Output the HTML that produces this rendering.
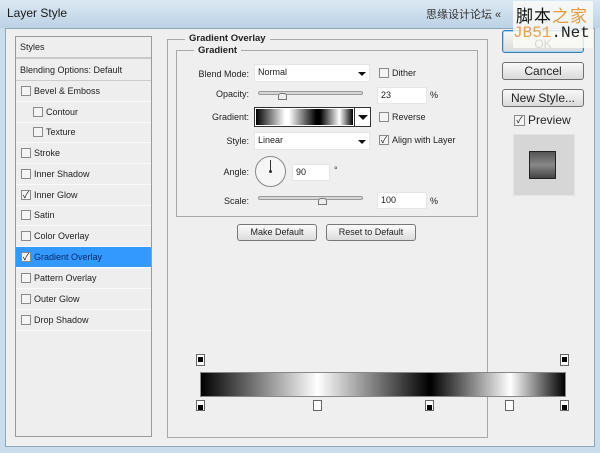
<!DOCTYPE html>
<html><head><meta charset="utf-8"><style>
*{margin:0;padding:0;box-sizing:border-box}
body{width:600px;height:453px;overflow:hidden;background:#c9dded;font-family:"Liberation Sans","Noto Sans CJK SC",sans-serif;font-size:9px;color:#222;position:relative}
.a{position:absolute}
.title{left:0;top:0;width:600px;height:28px;background:linear-gradient(#dbe8f3,#bcd2e5);}
.win{left:5px;top:28px;width:590px;height:419px;background:#efefef;border:1px solid #8fa6b8}
.lp{left:15px;top:36px;width:137px;height:401px;background:#eeeeee;border:1px solid #9a9a9a}
.it{position:absolute;left:0;width:135px;height:21px;border-bottom:1px solid #fafafa;line-height:20px;font-size:9px}
.cb{position:absolute;width:10px;height:10px;border:1px solid #8a8a8a;background:#f4f4f4;font-size:9px;line-height:8px;text-align:center;color:#111}
.gb{border:1px solid #a8a8a8}
.lbl{position:absolute;text-align:right;width:80px;font-size:9px}
.inp{position:absolute;background:#fff;border:1px solid #e6e6e6;font-size:9px;padding:2px 3px}
.btn{position:absolute;border:1px solid #777;border-radius:3px;background:linear-gradient(#fbfbfb,#dcdcdc);text-align:center;font-size:9px;line-height:15px}
.rbtn{position:absolute;left:502px;width:82px;border:1px solid #707070;border-radius:3px;background:linear-gradient(#f8f8f8,#dadada);text-align:center;font-size:12px}
.sl{position:absolute;height:4px;background:#d6d6d6;border:1px solid #9a9a9a;border-radius:2px}
.th{position:absolute;width:9px;height:7px;border:1px solid #777;background:#eee;border-radius:3px 3px 0 0}
.arr{position:absolute;width:0;height:0;border-left:4px solid transparent;border-right:4px solid transparent;border-top:4px solid #111}
.st{position:absolute;width:9px;height:11px;border:1px solid #666;background:#fff}
.st i{position:absolute;left:1px;top:3px;width:5px;height:5px;background:#000}
</style></head><body>
<div class="a title"></div>
<div class="a" style="left:7px;top:6px;font-size:12px;color:#1a1a1a">Layer Style</div>
<div class="a" style="left:426px;top:6px;font-size:11px;color:#333">思缘设计论坛 «</div>
<div class="a win"></div>

<div class="a lp">
 <div class="it" style="top:0;height:22px;padding-left:4px;border-bottom:2px solid #c8c8c8">Styles</div>
 <div class="it" style="top:23px;padding-left:4px;border-bottom:1px solid #ccc">Blending Options: Default</div>
 <div class="it" style="top:44px;padding-left:18px">Bevel &amp; Emboss<span class="cb" style="left:5px;top:5px"></span></div>
 <div class="it" style="top:65px;padding-left:30px">Contour<span class="cb" style="left:17px;top:5px"></span></div>
 <div class="it" style="top:85px;padding-left:30px">Texture<span class="cb" style="left:17px;top:5px"></span></div>
 <div class="it" style="top:106px;padding-left:18px">Stroke<span class="cb" style="left:5px;top:5px"></span></div>
 <div class="it" style="top:127px;padding-left:18px">Inner Shadow<span class="cb" style="left:5px;top:5px"></span></div>
 <div class="it" style="top:148px;padding-left:18px">Inner Glow<span class="cb" style="left:5px;top:5px">✓</span></div>
 <div class="it" style="top:168px;padding-left:18px">Satin<span class="cb" style="left:5px;top:5px"></span></div>
 <div class="it" style="top:189px;padding-left:18px">Color Overlay<span class="cb" style="left:5px;top:5px"></span></div>
 <div class="it" style="top:210px;padding-left:18px;background:#3399ff;color:#0a2a66">Gradient Overlay<span class="cb" style="left:5px;top:5px">✓</span></div>
 <div class="it" style="top:231px;padding-left:18px">Pattern Overlay<span class="cb" style="left:5px;top:5px"></span></div>
 <div class="it" style="top:252px;padding-left:18px">Outer Glow<span class="cb" style="left:5px;top:5px"></span></div>
 <div class="it" style="top:273px;padding-left:18px">Drop Shadow<span class="cb" style="left:5px;top:5px"></span></div>
</div>

<div class="a gb" style="left:167px;top:39px;width:321px;height:399px"></div>
<div class="a" style="left:185px;top:33px;background:#efefef;padding:0 4px;font-weight:bold;font-size:9.5px">Gradient Overlay</div>
<div class="a gb" style="left:176px;top:50px;width:302px;height:167px"></div>
<div class="a" style="left:194px;top:45px;background:#efefef;padding:0 4px;font-weight:bold;font-size:9.5px">Gradient</div>

<div class="lbl" style="left:169px;top:69px">Blend Mode:</div>
<div class="inp" style="left:254px;top:64px;width:116px;height:18px">Normal</div><div class="arr" style="left:358px;top:72px"></div>
<div class="cb" style="left:379px;top:68px"></div><div class="a" style="left:392px;top:68px">Dither</div>

<div class="lbl" style="left:169px;top:89px">Opacity:</div>
<div class="sl" style="left:258px;top:91px;width:105px"></div><div class="th" style="left:278px;top:93px"></div>
<div class="inp" style="left:377px;top:87px;width:50px;height:17px">23</div><div class="a" style="left:430px;top:90px">%</div>

<div class="lbl" style="left:169px;top:112px">Gradient:</div>
<div class="a" style="left:254px;top:107px;width:117px;height:20px;border:1px solid #333;background:#fff"></div>
<div class="a" style="left:256px;top:109px;width:97px;height:16px;background:linear-gradient(90deg,#000,#fff 30%,#fff 34%,#000 62%,#000 66%,#fff 86%,#000)"></div>
<div class="a" style="left:354px;top:108px;width:1px;height:18px;background:#333"></div>
<div class="arr" style="left:358px;top:115px;border-top-width:5px;border-left-width:5px;border-right-width:5px"></div>
<div class="cb" style="left:379px;top:112px"></div><div class="a" style="left:392px;top:112px">Reverse</div>

<div class="lbl" style="left:169px;top:136px">Style:</div>
<div class="inp" style="left:254px;top:132px;width:116px;height:18px">Linear</div><div class="arr" style="left:358px;top:140px"></div>
<div class="cb" style="left:379px;top:135px">✓</div><div class="a" style="left:392px;top:135px">Align with Layer</div>

<div class="lbl" style="left:169px;top:167px">Angle:</div>
<div class="a" style="left:255px;top:156px;width:31px;height:31px;border:1px solid #888;border-radius:50%;background:#f6f6f6"></div>
<div class="a" style="left:270px;top:160px;width:1px;height:12px;background:#333"></div>
<div class="a" style="left:269px;top:170px;width:3px;height:3px;background:#333;border-radius:50%"></div>
<div class="inp" style="left:292px;top:164px;width:38px;height:17px">90</div><div class="a" style="left:334px;top:165px">°</div>

<div class="lbl" style="left:169px;top:196px">Scale:</div>
<div class="sl" style="left:258px;top:196px;width:105px"></div><div class="th" style="left:318px;top:198px"></div>
<div class="inp" style="left:377px;top:192px;width:50px;height:17px">100</div><div class="a" style="left:430px;top:196px">%</div>

<div class="btn" style="left:237px;top:224px;width:80px;height:17px">Make Default</div>
<div class="btn" style="left:326px;top:224px;width:90px;height:17px">Reset to Default</div>

<div class="rbtn" style="top:30px;height:23px;line-height:26px;border-color:#3c7fb1;box-shadow:inset 0 0 0 1px #9fd5f5">OK</div>
<div class="rbtn" style="top:62px;height:18px;line-height:16px">Cancel</div>
<div class="rbtn" style="top:89px;height:18px;line-height:16px">New Style...</div>
<div class="cb" style="left:514px;top:115px;width:11px;height:11px">✓</div><div class="a" style="left:528px;top:113px;font-size:12px">Preview</div>
<div class="a" style="left:513px;top:134px;width:62px;height:62px;background:#d6d6d6;border:1px solid #e4e4e4"></div>
<div class="a" style="left:529px;top:151px;width:27px;height:28px;border:1px solid #222;background:linear-gradient(#555,#888 50%,#444)"></div>

<div class="a" style="left:200px;top:372px;width:366px;height:25px;border:1px solid #888;background:linear-gradient(90deg,#000,#fff 32%,#000 63%,#fff 85%,#000)"></div>
<div class="st" style="left:196px;top:354px;height:12px"><i style="top:2px"></i></div>
<div class="st" style="left:560px;top:354px;height:12px"><i style="top:2px"></i></div>
<div class="st" style="left:196px;top:400px"><i style="top:4px"></i></div>
<div class="st" style="left:313px;top:400px"></div>
<div class="st" style="left:425px;top:400px"><i style="top:4px"></i></div>
<div class="st" style="left:505px;top:400px"></div>
<div class="st" style="left:560px;top:400px"><i style="top:4px"></i></div>

<div class="a" style="left:513px;top:1px;width:80px;height:47px;background:rgba(251,251,246,0.82)"></div>
<div class="a" style="left:516px;top:2px;font-size:17px;color:#111;letter-spacing:1px">脚本<span style="color:#e59a3e">之家</span></div>
<div class="a" style="left:513px;top:24px;font-size:16px;font-family:'Liberation Mono',monospace;color:#222"><span style="color:#e8a055">JB51</span>.Net</div>
</body></html>
